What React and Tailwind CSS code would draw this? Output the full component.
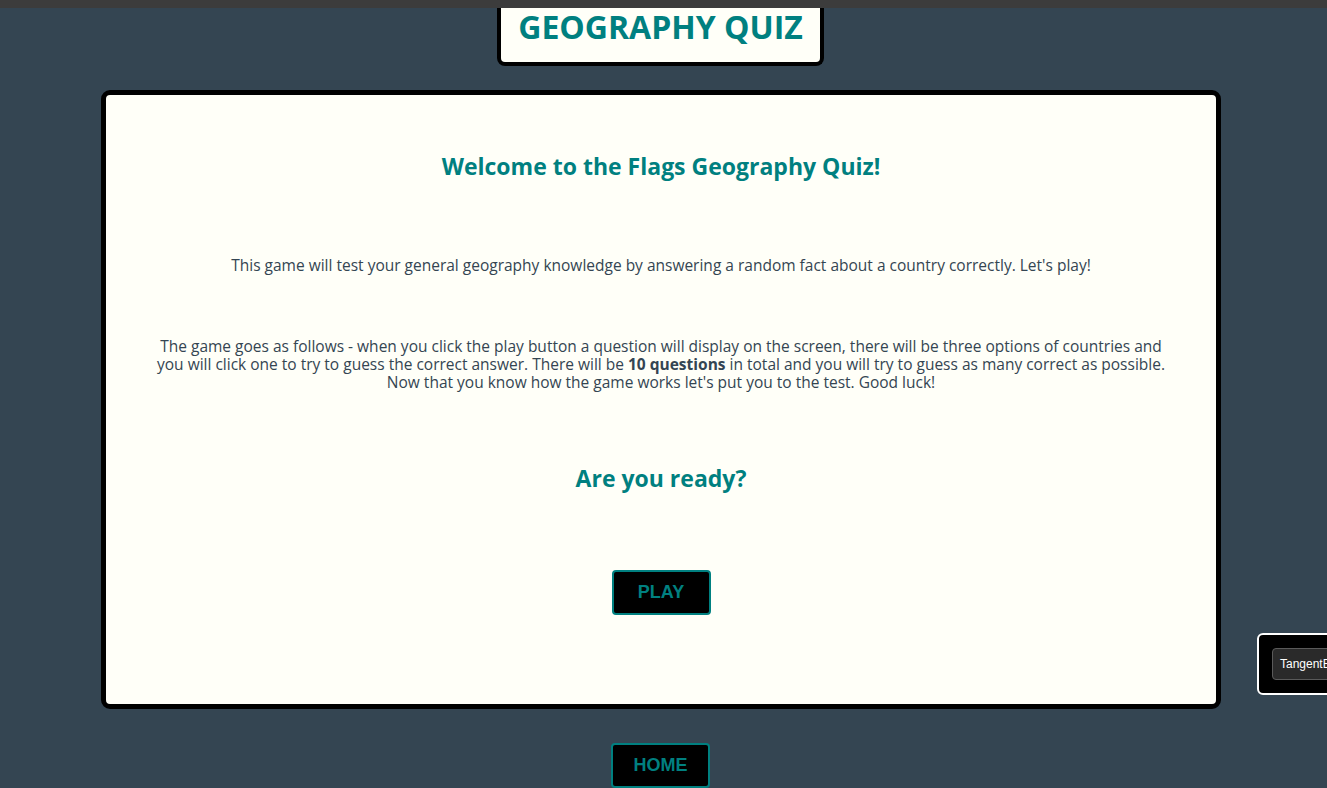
const UI_FONT = { fontFamily: '"Open Sans", "Noto Sans", sans-serif' };

function NavButton({ label }) {
  return (
    <button
      type="button"
      className="flex h-[45px] w-[99px] items-center justify-center rounded-[4px] border-2 border-[#008080] bg-black text-[18px] font-bold text-[#008080]"
      style={{ fontFamily: '"Liberation Sans", Arial, sans-serif' }}
    >
      {label}
    </button>
  );
}

export default function App() {
  return (
    <div className="relative min-h-[788px] bg-[#344552]" style={UI_FONT}>
      <div className="h-[8px] w-full bg-[#3c3c3c]" />

      <div className="w-[1321px]">
        <header className="flex justify-center">
          <div className="flex h-[58px] w-[327px] items-start justify-center rounded-b-[8px] border-4 border-t-0 border-black bg-[#fffff8]">
            <h1 className="mt-[-1px] text-[32px] font-bold leading-[40px] text-[#008080]">
              GEOGRAPHY QUIZ
            </h1>
          </div>
        </header>

        <main className="ml-[101px] mt-[24px] flex h-[619px] w-[1120px] flex-col items-center rounded-[9px] border-[5px] border-black bg-[#fffff8] text-[#344552]">
          <h2 className="mt-[57px] text-[23px] font-bold leading-[28px] text-[#008080]">
            Welcome to the Flags Geography Quiz!
          </h2>
          <p className="mt-[76px] text-[15.5px] leading-[18px]">
            This game will test your general geography knowledge by answering a random fact about a
            country correctly. Let's play!
          </p>
          <p className="mt-[63px] text-center text-[15.5px] leading-[18px]">
            The game goes as follows - when you click the play button a question will display on the
            screen, there will be three options of countries and
            <br />
            you will click one to try to guess the correct answer. There will be{" "}
            <strong>10 questions</strong> in total and you will try to guess as many correct as
            possible.
            <br />
            Now that you know how the game works let's put you to the test. Good luck!
          </p>
          <h2 className="mt-[73px] text-[23px] font-bold leading-[28px] text-[#008080]">
            Are you ready?
          </h2>
          <div className="mt-[78px]">
            <NavButton label="PLAY" />
          </div>
        </main>

        <div className="mt-[34px] flex justify-center">
          <NavButton label="HOME" />
        </div>
      </div>

      <div className="absolute left-[1257px] top-[633px] flex h-[62px] w-[90px] items-center rounded-[6px] border-2 border-white bg-black pl-[13px]">
        <div
          className="flex h-[32px] items-center whitespace-nowrap rounded-[4px] border border-[#5a5a5a] bg-[#2a2a2a] px-[7px] text-[12px] text-white"
          style={{ fontFamily: '"Liberation Sans", Arial, sans-serif' }}
        >
          TangentBot
        </div>
      </div>
    </div>
  );
}
